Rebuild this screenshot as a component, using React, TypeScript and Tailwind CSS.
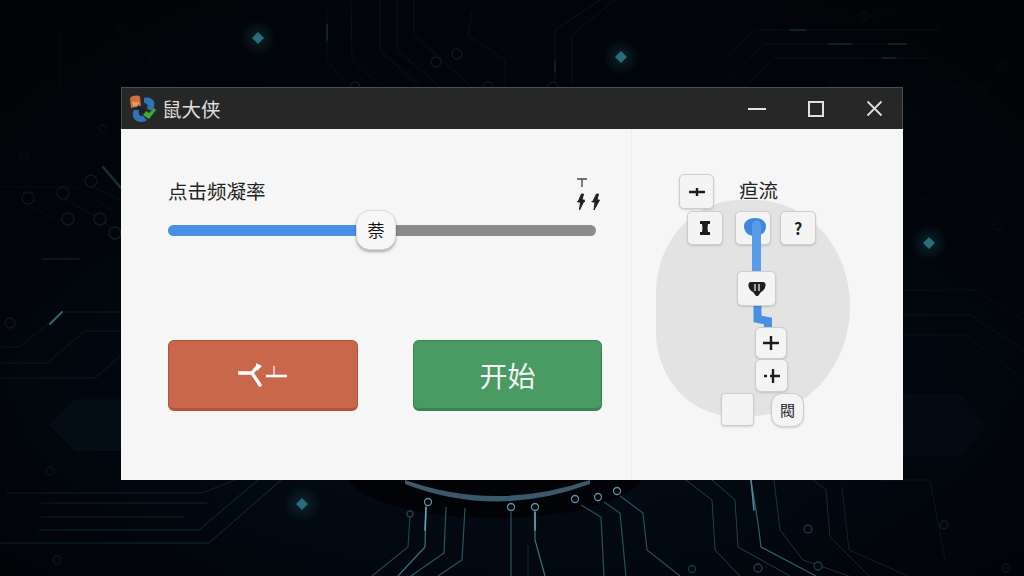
import React from "react";

const CJK = { fontFamily: '"Noto Sans CJK SC", "Noto Sans", sans-serif' };

const traces: [string, string, number][] = [
  ["327,10 327,60 348,87", "#16333d", 1],
  ["351,0 352,60 381,87", "#1a3742", 1],
  ["380,0 380,50 420,87", "#1d3d49", 1],
  ["397,0 397,50 440,87", "#1d3d49", 1],
  ["414,0 414,35 472,87", "#1d3d49", 1],
  ["472,12 468,35 505,60 505,87", "#1a3742", 1],
  ["150,50 153,78 175,87", "#0c1a22", 1],
  ["60,30 60,90", "#0a141a", 1],
  ["600,0 555,30 555,85", "#1a3b49", 1],
  ["615,0 572,35 572,85", "#1a3b49", 1],
  ["693,87 755,30 940,30", "#15303c", 1],
  ["718,87 764,44 915,44", "#15303c", 1],
  ["744,87 775,58 930,58", "#15303c", 1],
  ["870,16 940,16", "#0c1c24", 1],
  ["0,187 77,187 115,212", "#12262f", 1],
  ["28,205 55,219 68,219", "#14262e", 1],
  ["63,198 100,219 121,235", "#16303a", 1],
  ["91,186 121,200", "#16303a", 1],
  ["62,312 121,312", "#13303c", 1],
  ["62,312 20,347 0,347", "#102833", 1],
  ["85,331 121,331", "#102833", 1],
  ["85,331 47,363 0,363", "#102833", 1],
  ["121,355 95,378 0,378", "#102833", 1],
  ["40,130 100,170", "#0c1c24", 1],
  ["281,480 209,543 0,543", "#15303c", 1],
  ["258,480 199,530 39,530", "#15303c", 1],
  ["235,480 202,493 6,493", "#12262f", 1],
  ["207,503 40,503", "#12262f", 1],
  ["183,517 40,517", "#12262f", 1],
  ["426,507 425,547 398,576", "#3c7280", 1.2],
  ["446,507 444,553 411,576", "#2a5462", 1.2],
  ["465,508 462,560 438,576", "#2a5462", 1.2],
  ["410,517 408,547 372,576", "#1f4250", 1.2],
  ["511,512 511,576", "#2a5462", 1.2],
  ["535,512 535,540 545,576", "#3c7280", 1.2],
  ["528,545 528,576", "#12262f", 1.2],
  ["581,505 601,517 604,576", "#28505e", 1.2],
  ["604,502 620,513 626,576", "#28505e", 1.2],
  ["620,496 643,513 647,550 680,576", "#28505e", 1.2],
  ["686,480 712,500 715,550 740,576", "#1f4250", 1],
  ["712,480 735,500 738,547 790,576", "#1f4250", 1],
  ["751,480 758,523 761,547 816,576", "#2f6270", 1.2],
  ["774,480 780,530 803,560 849,576", "#1a3742", 1],
  ["813,480 826,490 830,537 869,576", "#16303a", 1],
  ["842,487 849,550 908,576", "#12262f", 1],
  ["880,480 930,480 945,560", "#0c1c24", 1],
  ["903,160 960,195 1024,195", "#0f2029", 1],
  ["903,190 940,205 985,205", "#0d1c24", 1],
  ["903,315 970,315 1024,350", "#0f2029", 1],
  ["903,335 965,335 1024,380", "#0d1c24", 1],
  ["903,290 975,290 1024,320", "#0c1a22", 1],
];

const rings: [number, number, number, string][] = [
  [428, 502, 3.5, "#5f8f9c"], [511, 507, 3.5, "#5f8f9c"], [535, 507, 3.5, "#5f8f9c"],
  [575, 499, 3.5, "#5f8f9c"], [598, 497, 3.5, "#5f8f9c"], [617, 491, 3.5, "#5f8f9c"],
  [410, 514, 3, "#1f4250"], [808, 529, 4, "#1f3f4c"], [944, 525, 4, "#14262e"],
  [692, 569, 3.5, "#1a3742"], [758, 568, 4, "#1f4250"], [818, 566, 4, "#1f4250"],
  [57, 560, 4, "#12222a"], [1006, 568, 4, "#10202a"],
  [436, 62, 5, "#37525c"], [457, 54, 5, "#37525c"], [355, 87, 5, "#37525c"], [488, 87, 5, "#37525c"],
  [553, 87, 5, "#254b5c"], [864, 16, 4, "#14262e"], [122, 28, 4, "#0c1a22"],
  [28, 198, 6, "#2c4750"], [63, 193, 6, "#2c4750"], [68, 219, 6, "#2c4750"], [100, 219, 6, "#2c4750"],
  [91, 181, 6, "#2c4750"], [115, 233, 6, "#2c4750"], [10, 323, 5, "#1a2e36"], [24, 157, 4, "#14262e"],
  [103, 129, 4, "#1a2e36"], [997, 225, 5, "#10202a"], [1002, 67, 5, "#0d1a22"],
  [955, 89, 4, "#0f1f28"], [983, 89, 4, "#0f1f28"], [50, 471, 4, "#0c1a22"],
];

const glows: [string, string, number][] = [
  ["790,30 806,30", "#3d8d9c", 1.5], ["828,44 852,44", "#3d8d9c", 1.5], ["888,44 906,44", "#3d8d9c", 1.5],
  ["882,58 896,58", "#3d8d9c", 1.5], ["327,25 327,40", "#2f7585", 2], ["62,312 50,324", "#6fc0c8", 2],
  ["42,259 79,259", "#3a5d66", 1.2], ["426,507 425,530", "#6aa8b2", 1.5], ["535,512 535,530", "#6aa8b2", 1.5],
  ["751,480 754,510", "#4f96a3", 1.5], ["103,167 121,188", "#3e9fb5", 2.5], ["555,62 555,72", "#2f6578", 2],
];

const diamonds: [number, number][] = [[258, 38], [621, 57], [302, 504], [929, 243]];

function CircuitBackdrop() {
  return (
    <svg className="absolute inset-0 h-full w-full" viewBox="0 0 1024 576" aria-hidden="true">
      <defs>
        <radialGradient id="bg" cx="50%" cy="50%" r="70%">
          <stop offset="0" stopColor="#06101a" />
          <stop offset="0.7" stopColor="#020810" />
          <stop offset="1" stopColor="#010306" />
        </radialGradient>
        <radialGradient id="halo">
          <stop offset="0" stopColor="#2a8c9e" stopOpacity="0.22" />
          <stop offset="1" stopColor="#2a8c9e" stopOpacity="0" />
        </radialGradient>
        <radialGradient id="fade" cx="50%" cy="95%" r="75%">
          <stop offset="0.3" stopColor="#01040a" stopOpacity="0" />
          <stop offset="0.7" stopColor="#01040a" stopOpacity="0.4" />
          <stop offset="1" stopColor="#010306" stopOpacity="0.72" />
        </radialGradient>
      </defs>
      <rect width="1024" height="576" fill="url(#bg)" />
      <polygon points="50,425 75,400 121,400 121,450 75,450" fill="#05101a" stroke="#0a1820" />
      <polygon points="830,80 870,80 925,115 880,125 830,125" fill="#05101a" stroke="#0a1820" />
      <polygon points="903,395 960,395 985,425 960,455 903,455" fill="#040d14" stroke="#08141b" />
      <ellipse cx="495" cy="470" rx="150" ry="48" fill="#010306" />
      <path d="M405 480 Q495 512 590 480 L590 484 Q495 519 405 484 Z" fill="#3a5a6c" />
      {traces.map(([p, c, w], i) => (
        <polyline key={i} points={p} fill="none" stroke={c} strokeWidth={w} />
      ))}
      {glows.map(([p, c, w], i) => (
        <polyline key={i} points={p} fill="none" stroke={c} strokeWidth={w} strokeLinecap="round" />
      ))}
      {rings.map(([x, y, r, c], i) => (
        <circle key={i} cx={x} cy={y} r={r} fill="#03090e" stroke={c} strokeWidth="1.3" />
      ))}
      <rect width="1024" height="576" fill="url(#fade)" />
      {diamonds.map(([x, y], i) => (
        <g key={i}>
          <circle cx={x} cy={y} r="18" fill="url(#halo)" />
          <polygon points={`${x - 6},${y} ${x},${y - 6} ${x + 6},${y} ${x},${y + 6}`} fill="#2a6d7a" />
        </g>
      ))}
    </svg>
  );
}

function Logo() {
  return (
    <svg width="28" height="28" viewBox="0 0 28 28" aria-hidden="true">
      <path d="M15 3 C22 1 27 6 25 12 C24 16 20 16 18 13 C20 10 17 8 15 8 Z" fill="#2f73b8" />
      <path d="M5 15 C2 20 5 27 12 27 C15 27 17 26 18 25 L14 21 C10 22 9 18 10 15 Z" fill="#2f73b8" />
      <path d="M1 3 C4 0 10 0 11 2 L12 11 L2 13 Z" fill="#cf6f3a" />
      <path d="M3 8 H10 M4 10 H9" stroke="#f3c79b" strokeWidth="1" />
      <path d="M9 10 L18 17 L15 19 L8 13 Z" fill="#16202a" />
      <path d="M14 20 L20 24 L27 15 L25 13 L20 18 L17 16 Z" fill="#3fa83f" />
    </svg>
  );
}

function Key({ className, children }: { className: string; children?: React.ReactNode }) {
  return (
    <div
      className={`absolute flex items-center justify-center border-[1.5px] border-[#cdcdcd] bg-[#f4f4f4] text-[#1c1c1c] shadow-[0_1px_2px_rgba(0,0,0,0.15)] ${className}`}
      style={CJK}
    >
      {children}
    </div>
  );
}

export default function App() {
  return (
    <div className="relative h-[576px] w-[1024px] overflow-hidden bg-[#02060b]" style={CJK}>
      <CircuitBackdrop />
      <div className="relative pl-[121px] pt-[87px]">
        <div className="flex h-[393px] w-[782px] flex-col">
          <div className="flex h-[42px] shrink-0 items-center border border-b-0 border-[#4c4c4c] bg-[#272727] pl-[7px]">
            <Logo />
            <span className="ml-[5px] text-[19.5px] leading-none text-[#dedede]">鼠大侠</span>
            <div className="ml-auto flex items-center gap-1">
              <div className="flex h-[40px] w-[55px] items-center justify-center">
                <div className="h-[2px] w-[18px] bg-[#e4e4e4]" />
              </div>
              <div className="flex h-[40px] w-[55px] items-center justify-center">
                <div className="h-[16px] w-[16px] border-2 border-[#e0e0e0]" />
              </div>
              <div className="flex h-[40px] w-[55px] items-center justify-center">
                <svg width="17" height="17" viewBox="0 0 17 17" aria-hidden="true">
                  <path d="M1.5 1.5 L15.5 15.5 M15.5 1.5 L1.5 15.5" stroke="#dcdcdc" strokeWidth="1.8" />
                </svg>
              </div>
            </div>
          </div>

          <div className="flex min-h-0 flex-1 bg-[#f6f6f6]">
            <div className="flex w-[510px] shrink-0 flex-col pl-[47px] pt-[48px]">
              <div className="flex h-[35px] w-[434px] items-start justify-between">
                <span className="text-[19.5px] leading-[28px] text-[#222]">点击频凝率</span>
                <div className="mr-[2px] flex flex-col items-start">
                  <svg width="24" height="36" viewBox="0 0 24 36" aria-hidden="true">
                    <path d="M1 2 H11 M6 2 V10" stroke="#4a4a4a" strokeWidth="1.4" fill="none" />
                    <path d="M5.5 17 L2 25 H4.5 L3.5 33 L8.5 23 H6 L7.5 17 Z M1 24.5 H9" fill="#222" stroke="#222" strokeWidth="1" />
                    <path d="M20.5 17 L16.5 25 H19 L18 33 L23.5 23 H21 L22.5 17 Z M15.5 24.5 H23" fill="#222" stroke="#222" strokeWidth="1" />
                  </svg>
                </div>
              </div>
              <div className="relative mt-[13px] flex h-[11px] w-[428px]">
                <div className="h-full w-[208px] rounded-l-full bg-[#4a90e2]" />
                <div className="h-full flex-1 rounded-r-full bg-[#8b8b8b]" />
                <div className="absolute left-[188px] top-[-15px] flex h-[40px] w-[40px] items-center justify-center rounded-[14px] border border-[#dcdcdc] bg-[#f7f7f7] text-[17px] text-[#111] shadow-[0_2px_3px_rgba(0,0,0,0.3)]">
                  萘
                </div>
              </div>
              <div className="mt-[104px] flex gap-[55px]">
                <div className="flex h-[71px] w-[190px] items-center justify-center rounded-[6px] border border-b-[3px] border-[#b0553a] bg-[#c8674a]">
                  <svg width="50" height="28" viewBox="0 0 50 28" aria-hidden="true">
                    <path d="M1 12 H14 L19 6 M14 12 L22 24" stroke="#fff" strokeWidth="3.4" fill="none" strokeLinecap="round" />
                    <path d="M18 2 L24 5 L19 10 Z" fill="#fff" />
                    <path d="M28 15 H49" stroke="#fff" strokeWidth="2.6" />
                    <path d="M36 14 V5" stroke="#fff" strokeWidth="1.2" fill="none" />
                  </svg>
                </div>
                <div className="flex h-[71px] w-[189px] items-center justify-center rounded-[6px] border border-b-[3px] border-[#3b8252] bg-[#4a9a63] text-[28px] text-[#f4f4f4]">
                  开始
                </div>
              </div>
            </div>

            <div className="relative flex-1 border-l border-[#eeeeee]">
              <div className="absolute left-[24px] top-[71px] h-[216px] w-[194px] rounded-[44%_50%_52%_40%] bg-[#e3e3e3]" />
              <span className="absolute left-[107px] top-[47px] text-[19.5px] leading-[28px] text-[#222]">疸流</span>
              <Key className="left-[47px] top-[45px] h-[35px] w-[35px] rounded-[5px]">
                <svg width="18" height="12" viewBox="0 0 18 12" aria-hidden="true">
                  <path d="M1 6 H17 M9 2 V10" stroke="#1c1c1c" strokeWidth="2.4" />
                </svg>
              </Key>
              <Key className="left-[55px] top-[82px] h-[34px] w-[36px] rounded-[5px]">
                <svg width="10" height="14" viewBox="0 0 10 14" aria-hidden="true">
                  <path d="M0 0 H10 V3 H8 Q7 7 8 11 H10 V14 H0 V11 H2 Q3 7 2 3 H0 Z" fill="#1c1c1c" />
                </svg>
              </Key>
              <Key className="left-[103px] top-[82px] h-[34px] w-[36px] rounded-[5px]" />
              <Key className="left-[148px] top-[82px] h-[34px] w-[36px] rounded-[5px] text-[16px] font-bold">
                ?
              </Key>
              <svg className="absolute left-0 top-0" width="270" height="300" viewBox="0 0 270 300" aria-hidden="true">
                <path d="M112 97 C112 92 117 89 123 89 C129 89 134 92 134 97 C134 103 130 107 123 107 C116 107 112 103 112 97 Z" fill="#3f87dc" />
                <path d="M124.5 96 V145" stroke="#5a9ce8" strokeWidth="9" fill="none" strokeLinecap="round" />
                <path d="M125.5 176 V190 L136 192 V200" stroke="#4a90e2" strokeWidth="8" fill="none" />
              </svg>
              <Key className="left-[105px] top-[142px] h-[35px] w-[39px] rounded-[5px]">
                <svg width="18" height="16" viewBox="0 0 18 16" aria-hidden="true">
                  <path d="M3 1 H15 Q18 1 17.5 5 Q17 9 13 11 L10 15 H8 L5 11 Q1 9 .5 5 Q0 1 3 1 Z" fill="#1f1f1f" />
                  <path d="M7 3 V10 M11 3 V10" stroke="#f5f5f5" strokeWidth="1.2" />
                </svg>
              </Key>
              <Key className="left-[123px] top-[198px] h-[32px] w-[32px] rounded-[6px]">
                <svg width="16" height="16" viewBox="0 0 16 16" aria-hidden="true">
                  <path d="M0 8 H16 M8 1 V15" stroke="#1c1c1c" strokeWidth="2.4" />
                </svg>
              </Key>
              <Key className="left-[123px] top-[230px] h-[33px] w-[33px] rounded-[6px]">
                <svg width="16" height="16" viewBox="0 0 16 16" aria-hidden="true">
                  <path d="M0 8 H3 M6 8 H16 M9 1 V15" stroke="#1c1c1c" strokeWidth="2.4" />
                </svg>
              </Key>
              <Key className="left-[89px] top-[264px] h-[33px] w-[33px] rounded-[4px]" />
              <Key className="left-[139px] top-[264px] h-[34px] w-[33px] rounded-[11px] text-[15px]">
                閥
              </Key>
            </div>
          </div>
        </div>
      </div>
    </div>
  );
}
